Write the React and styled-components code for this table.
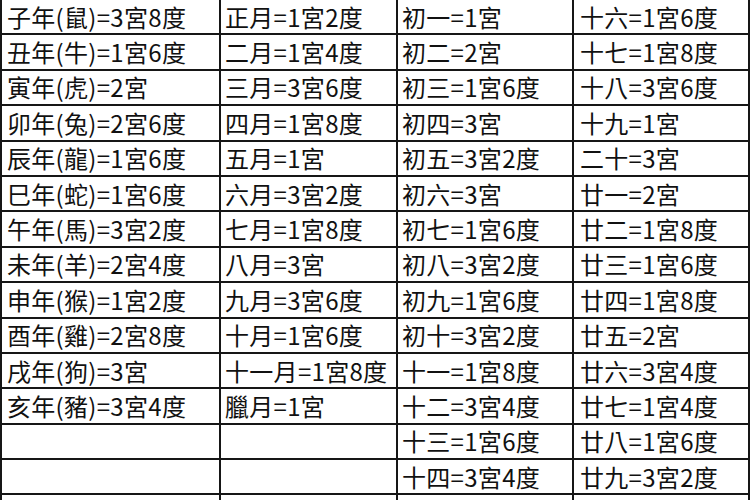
import React from "react";
import styled, { createGlobalStyle } from "styled-components";

const Global = createGlobalStyle`
  html, body { margin: 0; padding: 0; background: #fff; overflow: hidden; }
  body { width: 750px; height: 500px; }
`;

const Table = styled.div`
  display: grid;
  grid-template-columns: 217px 175px 174px 174px;
  grid-auto-rows: 33.4px;
  gap: 2px;
  padding: 2px 1px 0 2px;
  margin-top: -2px;
  width: 750px;
  height: 502px;
  overflow: hidden;
  box-sizing: border-box;
  background: #161616;
`;

const Cell = styled.div`
  background: #fff;
  display: flex;
  align-items: center;
  padding-left: ${(p) => p.$pad}px;
  font-family: "Noto Sans CJK TC", "Noto Sans CJK SC", sans-serif;
  font-size: 24px;
  letter-spacing: 0.3px;
  line-height: 1;
  color: #111;
  white-space: nowrap;
  overflow: hidden;
`;

const col1 = ["子年(鼠)=3宮8度","丑年(牛)=1宮6度","寅年(虎)=2宮","卯年(兔)=2宮6度","辰年(龍)=1宮6度","巳年(蛇)=1宮6度","午年(馬)=3宮2度","未年(羊)=2宮4度","申年(猴)=1宮2度","酉年(雞)=2宮8度","戌年(狗)=3宮","亥年(豬)=3宮4度","","",""];
const col2 = ["正月=1宮2度","二月=1宮4度","三月=3宮6度","四月=1宮8度","五月=1宮","六月=3宮2度","七月=1宮8度","八月=3宮","九月=3宮6度","十月=1宮6度","十一月=1宮8度","臘月=1宮","","",""];
const col3 = ["初一=1宮","初二=2宮","初三=1宮6度","初四=3宮","初五=3宮2度","初六=3宮","初七=1宮6度","初八=3宮2度","初九=1宮6度","初十=3宮2度","十一=1宮8度","十二=3宮4度","十三=1宮6度","十四=3宮4度",""];
const col4 = ["十六=1宮6度","十七=1宮8度","十八=3宮6度","十九=1宮","二十=3宮","廿一=2宮","廿二=1宮8度","廿三=1宮6度","廿四=1宮8度","廿五=2宮","廿六=3宮4度","廿七=1宮4度","廿八=1宮6度","廿九=3宮2度",""];

const pads = [5, 4, 4, 6];

export default function App() {
  const rows = col1.map((_, i) => [col1[i], col2[i], col3[i], col4[i]]);
  return (
    <>
      <Global />
      <Table>
        {rows.map((r, i) =>
          r.map((t, j) => (
            <Cell key={`${i}-${j}`} $pad={pads[j]}>
              {t}
            </Cell>
          ))
        )}
      </Table>
    </>
  );
}
